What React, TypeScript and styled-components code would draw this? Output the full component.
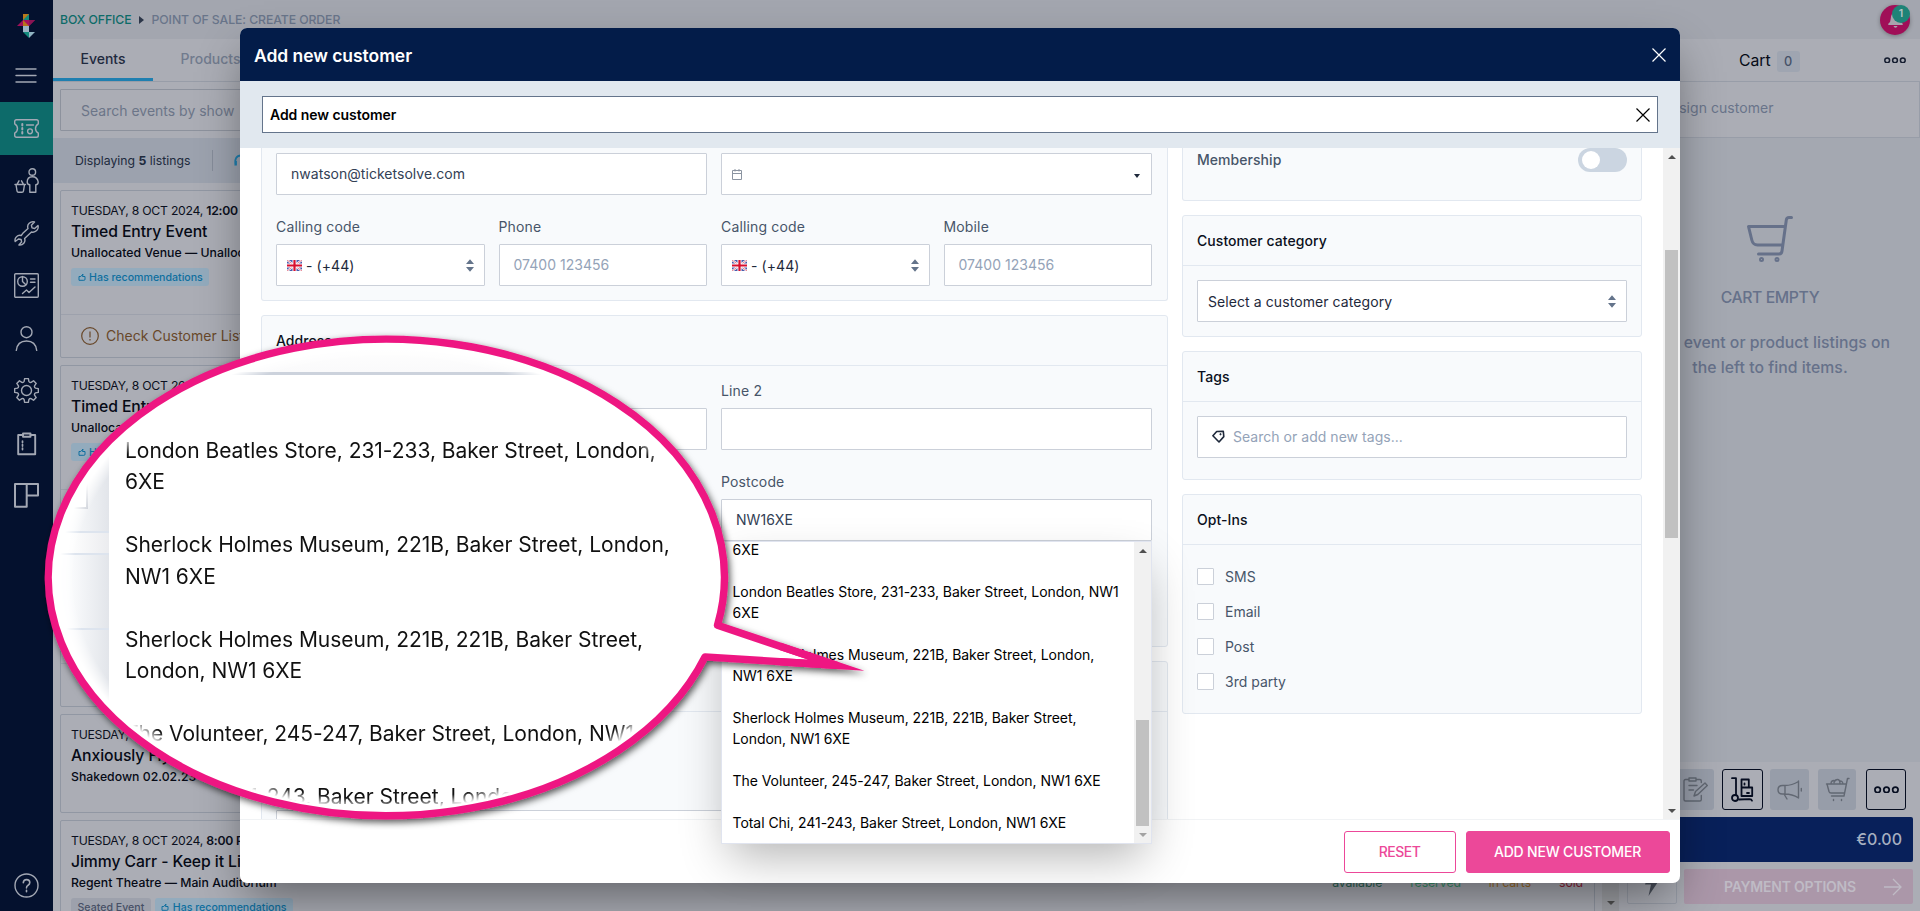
import React from 'react';
import styled, { createGlobalStyle, css } from 'styled-components';

const GlobalStyle = createGlobalStyle`
  * { box-sizing: border-box; }
  body { margin: 0; overflow: hidden; }
  svg { display: block; flex: none; }
`;

const addresses = [
  'London Beatles Store, 231-233, Baker Street, London, NW1 6XE',
  'Sherlock Holmes Museum, 221B, Baker Street, London, NW1 6XE',
  'Sherlock Holmes Museum, 221B, 221B, Baker Street, London, NW1 6XE',
  'The Volunteer, 245-247, Baker Street, London, NW1 6XE',
  'Total Chi, 241-243, Baker Street, London, NW1 6XE',
];

const optIns = ['SMS', 'Email', 'Post', '3rd party'];

// outline of an eight-toothed cog, drawn round 12.5,12.5
const cogPath = Array.from({ length: 8 }, (_, i) => {
  const at = (r: number, deg: number) => {
    const a = ((i * 45 + deg) * Math.PI) / 180;
    return `${(12.5 + r * Math.sin(a)).toFixed(2)} ${(12.5 - r * Math.cos(a)).toFixed(2)}`;
  };
  return `${i ? 'L' : 'M'}${at(9.3, -15)} L${at(12, -9)} L${at(12, 9)} L${at(9.3, 15)} Q${at(8.2, 22.5)} ${at(9.3, 30)}`;
}).join(' ') + 'Z';

const Logo = () => (
  <svg width="18" height="24" viewBox="0 0 18 24">
    <path d="M6 0h6v6H6z" fill="#b9791b" />
    <path d="M12 0v6H6z" fill="#128a7c" />
    <path d="M6 6v6H0z" fill="#a0105a" />
    <path d="M6 6h12l-6 6H6z" fill="#a90f5e" />
    <path d="M6 12V6l6 6z" fill="#b8741a" />
    <path d="M6 12h6v6H6z" fill="#9db4c4" />
    <path d="M6 18h6v6z" fill="#128a7c" />
    <path d="M12 18h6l-6 6z" fill="#8fb3c2" />
    <path d="M12 6h6l-6 6z" fill="#8a1453" />
  </svg>
);

const MenuIcon = () => (
  <svg width="22" height="15" viewBox="0 0 22 15" stroke="currentColor" strokeWidth="1.4" strokeLinecap="round">
    <path d="M1 1h20M1 7.5h20M1 14h20" />
  </svg>
);

const TicketIcon = () => (
  <Glyph>
    <path d="M2.5 3.7h20q1.8 0 1.8 1.8v2.3q-2.8 1.7-2.8 4.7t2.8 4.7v2.3q0 1.8-1.8 1.8h-20q-1.800 0-1.800-1.800v-2.300q2.800-1.700 2.800-4.700T.7 7.800V5.500q0-1.800 1.800-1.800z" />
    <circle cx="16" cy="15.3" r="2.400" />
    <path d="M12.500 9h7" />
    <path d="M8.300 8v1.600M8.300 12v1.600M8.300 16v1.600" strokeWidth="2" />
  </Glyph>
);

const CustomerIcon = () => (
  <Glyph>
    <circle cx="18.3" cy="4" r="3.3" />
    <path d="M15.800 24.300v-7.500q-2.600-.3-2.600-2.800 0-5.300 5.100-5.300t5.900 5.300q0 2.500-2.400 2.800v7.500z" />
    <path d="M1 16.500h10.500M2 16.500l1 6.300q.2 1.500 1.600 1.500h3.300q1.400 0 1.600-1.500l1-6.300M3 16.300l2-3.500M9.500 16.300l-2-3.500" />
  </Glyph>
);

const WrenchIcon = () => (
  <Glyph>
    <path d="M8.800 12.300 14 7.500q-1.100-3 1.200-5.200Q17.500.2 20.500 1L17.400 4.200l.6 2.700 2.700.6L24 4.500q.8 3-1.300 5.100-2.200 2.200-5.200 1.400l-6.900 6.400q1 2.900-.8 4.900-2 2.200-4.900 1.700l2.700-3-.5-2.500-2.600-.5-3.300 2.500q-.8-2.800 1.300-4.800 2-2 4.700-1.200z" />
  </Glyph>
);

const ReportIcon = () => (
  <Glyph>
    <rect x=".7" y=".7" width="23.6" height="23.6" rx="1" />
    <circle cx="8.5" cy="8.5" r="4.8" />
    <path d="M8.500 3.500v5l3.300 3.300M16.500 6h4.500M16.500 9.200h4.500M8.500 20.500l4-3.500 2.500 2.500 6-5.500" />
  </Glyph>
);

const UserIcon = () => (
  <Glyph>
    <circle cx="12.5" cy="6.2" r="5.5" />
    <path d="M2.300 24.500q1-9.500 10.200-9.500t10.200 9.500" />
  </Glyph>
);

const CogIcon = () => (
  <Glyph>
    <path d={cogPath} />
    <circle cx="12.5" cy="12.5" r="5" />
  </Glyph>
);

const ClipboardIcon = () => (
  <Glyph>
    <path d="M9 4H4.200v19.300h17V4H16.500" strokeWidth="1.900" />
    <path d="M9 2.500h7.500v3.300H9z" strokeWidth="1.900" />
    <path d="M8.500 10v1.600M8.500 13.500v1.600M8.500 17v1.600" strokeWidth="1.700" />
  </Glyph>
);

const BlocksIcon = () => (
  <Glyph>
    <path d="M1 1h11.700v22.800H1zM12.700 1h11.300v11.500H12.700z" strokeWidth="2" />
  </Glyph>
);

const HelpIcon = () => (
  <Glyph>
    <circle cx="12.5" cy="12.5" r="11.5" />
    <path d="M9.300 9.800q.2-3.200 3.300-3.200t3.200 2.900q0 1.700-1.700 2.700t-1.600 2.700M12.500 17.300v1.500" strokeWidth="1.600" />
  </Glyph>
);

const CloseIcon = () => (
  <svg width="14" height="14" viewBox="0 0 14 14" stroke="currentColor" strokeWidth="1.2">
    <path d="M.5.5l13 13M13.500.5l-13 13" />
  </svg>
);

const SortIcon = () => (
  <svg width="8" height="13" viewBox="0 0 8 13" fill="#64748b">
    <path d="M0 5 4 .3 8 5zM0 8h8l-4 4.700z" />
  </svg>
);

const ThumbIcon = () => (
  <svg width="8" height="8" viewBox="0 0 8 8" fill="none" stroke="currentColor">
    <path d="M1 3.500v3.800h4.800L7 6.800V3.500H4.500L5 1 2.800 3.500z" />
  </svg>
);

const WarningIcon = () => (
  <svg width="18" height="18" viewBox="0 0 18 18" fill="none" stroke="currentColor" strokeWidth="1.2">
    <circle cx="9" cy="9" r="8.3" />
    <path d="M9 4.500v6M9 12v1.500" />
  </svg>
);

const FlagIcon = () => (
  <svg width="15" height="11" viewBox="0 0 15 11">
    <rect width="15" height="11" rx="1.5" fill="#4a5bab" />
    <path d="M0 0l15 11M15 0L0 11" stroke="#fff" strokeWidth="2.2" />
    <path d="M0 0l15 11M15 0L0 11" stroke="#d8485e" strokeWidth=".7" />
    <path d="M7.500 0v11M0 5.500h15" stroke="#fff" strokeWidth="4" />
    <path d="M7.500 0v11M0 5.500h15" stroke="#d80f2f" strokeWidth="2.2" />
  </svg>
);

const CalendarIcon = () => (
  <svg width="10" height="11" viewBox="0 0 10 11" fill="none" stroke="#8b94a1">
    <path d="M.5 1.500h9v9h-9zM.5 4.500h9M3 0v2.500M7 0v2.500" />
  </svg>
);

const TagIcon = () => (
  <svg width="13" height="13" viewBox="0 0 13 13" fill="none" stroke="#1e293b" strokeWidth="1.6" strokeLinejoin="round">
    <path d="M.9 5.800 4.700 1.500l6.600-.3.500 5.400L7 12z" />
    <circle cx="8.5" cy="4.2" r=".7" fill="#1e293b" strokeWidth=".8" />
  </svg>
);

const BellIcon = () => (
  <svg width="15" height="16" viewBox="0 0 15 16" fill="#a9a3ad">
    <path d="M7.500 0q4.800 1 4.800 7 0 3 2.400 4.800v1.200H.3v-1.200Q2.700 10 2.700 7q0-6 4.800-7zM5.500 14h4q-.5 1.800-2 1.800t-2-1.800z" />
  </svg>
);

const CartIcon = () => (
  <svg width="46" height="46" viewBox="0 0 46 46" fill="none" stroke="currentColor" strokeWidth="3" strokeLinecap="round" strokeLinejoin="round">
    <path d="M44.500 1.500H42q-2.300 0-2.700 2.500L35 35q-.4 3-3 3H11.500M38 10.500H1.500l3.300 13.500q1.200 5 5.700 5H35.500" />
    <circle cx="14.5" cy="43.5" r="1" />
    <circle cx="30" cy="43.5" r="1" />
  </svg>
);

const DotsIcon = ({ width = 22 }: { width?: number }) => (
  <svg width={width} height={width / 3.3} viewBox="0 0 22 6.6" fill="none" stroke="currentColor" strokeWidth="1.5">
    <circle cx="3.2" cy="3.3" r="2.400" />
    <circle cx="11" cy="3.3" r="2.400" />
    <circle cx="18.8" cy="3.3" r="2.400" />
  </svg>
);

const NoteIcon = () => (
  <Glyph>
    <path d="M6 2.500H2.500Q1 2.500 1 4v18.500Q1 24 2.500 24h14.300q1.500 0 1.500-1.500v-4M13 2.500h3.800q1.500 0 1.500 1.500v1.500M6 1h7v3H6zM6 8.500h8M6 13h4.500" />
    <path d="M12.500 14.500 22 6l2.300 2.500-9.500 9L11 19z" />
  </Glyph>
);

const TrolleyIcon = () => (
  <Glyph>
    <path d="M2 1.200h4V18M9 22.500l10.500-.3q2 0 2.500 1.500" strokeWidth="1.800" />
    <circle cx="5" cy="21" r="3" strokeWidth="1.800" />
    <path d="M11.500 2.500h7.300v8h-7.300zM11.500 10.500h10.700v8.500H11.500zM14.500 7.500v-1M17 16h2" strokeWidth="1.800" />
  </Glyph>
);

const MegaphoneIcon = () => (
  <Glyph>
    <path d="M21.500 4v17M21.500 4.500Q15 8.500 8 8.500H5.500q-4.500 0-4.500 4.300T5.500 17H8q7 0 13.500 3.800M8 8.500V17M7 17l3 5M24.300 11.500v2.500" />
  </Glyph>
);

const BasketIcon = () => (
  <Glyph>
    <path d="M24 1.500h-1.500L19 19H6.500M1.500 7h19.800M2 7l2 7.500q.5 1.500 2 1.500h13.500M6 7q0-3.500 3-3.500M9 5.500q1-3 3.500-3t2.500 4.500M14.500 4q3-.5 3.500 3M8.500 22.500v1M16.500 22.500v1" />
  </Glyph>
);

const BoltIcon = () => (
  <svg width="16" height="26" viewBox="0 0 16 26" fill="currentColor">
    <path d="M6 0h8l-3 9h5L4.500 26 7 14.500H1z" />
  </svg>
);

const ArrowIcon = () => (
  <svg width="18" height="18" viewBox="0 0 18 18" fill="none" stroke="currentColor" strokeWidth="1.3">
    <path d="M0 9h17M9 1l8 8-8 8" />
  </svg>
);

const HeadphonesIcon = () => (
  <svg width="14" height="14" viewBox="0 0 14 14" fill="none" stroke="#1f7fae" strokeWidth="1.8">
    <path d="M1.500 11.500Q0 1.500 7 1.500t5.500 10M2 7v4.500" />
  </svg>
);

const EventCard = (props: {
  title: string;
  venue: string;
  time?: string;
  height: number;
  badges?: boolean;
  seated?: boolean;
  note?: string;
  legend?: boolean;
}) => (
  <Card $height={props.height}>
    <CardInfo>
      <CardDate>
        TUESDAY, 8 OCT 2024, <b>{props.time}</b>
      </CardDate>
      <CardTitle>{props.title}</CardTitle>
      <CardVenue>
        {props.venue}
        {props.legend && (
          <Legend>
            <LegendItem $color="#2c6655">available</LegendItem>
            <LegendItem $color="#3a936d">reserved</LegendItem>
            <LegendItem $color="#a06f2c">in carts</LegendItem>
            <LegendItem $color="#8f2438">sold</LegendItem>
          </Legend>
        )}
      </CardVenue>
      <Badges>
        {props.seated && <Badge>Seated Event</Badge>}
        {props.badges && (
          <Badge $blue>
            <ThumbIcon />
            Has recommendations
          </Badge>
        )}
      </Badges>
    </CardInfo>
    {props.note !== undefined && (
      <CardNote>
        {props.note && <WarningIcon />}
        {props.note}
      </CardNote>
    )}
  </Card>
);

const CallingCode = () => (
  <Field>
    <Label>Calling code</Label>
    <Input $select>
      <FlagIcon />
      <SelectText>- (+44)</SelectText>
      <SortIcon />
    </Input>
  </Field>
);

const App = () => {
  return (
    <Page>
      <GlobalStyle />
      <SideBar>
        <SideTop>
          <Logo />
          <MenuIcon />
        </SideTop>
        <SideItem $active><TicketIcon /></SideItem>
        <SideItem><CustomerIcon /></SideItem>
        <SideItem><WrenchIcon /></SideItem>
        <SideItem><ReportIcon /></SideItem>
        <SideItem><UserIcon /></SideItem>
        <SideItem><CogIcon /></SideItem>
        <SideItem><ClipboardIcon /></SideItem>
        <SideItem><BlocksIcon /></SideItem>
        <SideHelp><HelpIcon /></SideHelp>
      </SideBar>

      <Main>
        <TopBar>
          <Crumb $link>BOX OFFICE</Crumb>
          <CrumbArrow />
          <Crumb>POINT OF SALE: CREATE ORDER</Crumb>
          <Bell>
            <BellIcon />
            <BellCount>1</BellCount>
          </Bell>
        </TopBar>
        <Columns>
          <Listings>
            <Tabs>
              <Tab $active>Events</Tab>
              <Tab>Products</Tab>
            </Tabs>
            <SearchRow>
              <SearchBox>Search events by show</SearchBox>
            </SearchRow>
            <FilterBar>
              <span>Displaying <b>5</b> listings</span>
              <FilterDivider />
              <HeadphonesIcon />
            </FilterBar>
            <ListArea>
              <CardList>
                <EventCard title="Timed Entry Event" venue="Unallocated Venue — Unallocated" time="12:00 PM" height={168} badges note="Check Customer List" />
                <EventCard title="Timed Entry Event" venue="Unallocated" time="" height={167.5} badges note="" />
                <EventCard title="Timed Entry Event" venue="Unallocated" time="" height={167.5} badges note="" />
                <EventCard title="Anxiously Fly" venue="Shakedown 02.02.23" time="" height={99} />
                <EventCard title="Jimmy Carr - Keep it Live" venue="Regent Theatre — Main Auditorium" time="8:00 PM" height={168} badges seated legend />
              </CardList>
              <ListScroll>
                <ScrollArrow $down />
              </ListScroll>
            </ListArea>
          </Listings>

          <CartPanel>
            <CartHeader>
              <CartTitle>Cart</CartTitle>
              <CartCount>0</CartCount>
              <DotsIcon />
            </CartHeader>
            <AssignRow>Assign customer</AssignRow>
            <CartBody>
              <CartIcon />
              <CartEmpty>CART EMPTY</CartEmpty>
              <CartHint>Use event or product listings on the left to find items.</CartHint>
            </CartBody>
            <CartFooter>
              <ToolRow>
                <Tool $width={38}><NoteIcon /></Tool>
                <Tool $width={41} $on><TrolleyIcon /></Tool>
                <Tool $width={39}><MegaphoneIcon /></Tool>
                <Tool $width={38}><BasketIcon /></Tool>
                <Tool $width={40} $on><DotsIcon width={25} /></Tool>
              </ToolRow>
              <Total>€0.00</Total>
              <PayRow>
                <BoltButton><BoltIcon /></BoltButton>
                <PayButton>
                  <span>PAYMENT OPTIONS</span>
                  <ArrowIcon />
                </PayButton>
              </PayRow>
            </CartFooter>
          </CartPanel>
        </Columns>
      </Main>

      <Overlay>
        <Modal>
          <ModalHeader>
            Add new customer
            <CloseIcon />
          </ModalHeader>
          <ModalSub>
            <SubBox>
              Add new customer
              <CloseIcon />
            </SubBox>
          </ModalSub>
          <ModalBody>
            <FormGrid>
              <Column>
                <Panel $cut>
                  <PanelBody $top={5} $right={15}>
                    <Row>
                      <Input>nwatson@ticketsolve.com</Input>
                      <Input $select>
                        <CalendarIcon />
                        <SelectText />
                        <Caret />
                      </Input>
                    </Row>
                    <Row $cols={4}>
                      <CallingCode />
                      <Field>
                        <Label>Phone</Label>
                        <Input $placeholder>07400 123456</Input>
                      </Field>
                      <CallingCode />
                      <Field>
                        <Label>Mobile</Label>
                        <Input $placeholder>07400 123456</Input>
                      </Field>
                    </Row>
                  </PanelBody>
                </Panel>
                <Panel>
                  <PanelTitle>Address</PanelTitle>
                  <PanelBody $right={15}>
                    <Row>
                      <Field><Label /><Input /></Field>
                      <Field>
                        <Label>Line 2</Label>
                        <Input />
                      </Field>
                    </Row>
                    <Row>
                      <Field><Label /><Input /></Field>
                      <Field>
                        <Label>Postcode</Label>
                        <Input>NW16XE</Input>
                      </Field>
                    </Row>
                    <Row>
                      <Field><Label /><Input /></Field>
                      <Field><Label /><Input /></Field>
                    </Row>
                  </PanelBody>
                </Panel>
                <Panel>
                  <PanelTitle />
                  <PanelBody $top={70} $right={15}>
                    <Field><Label /><Input /></Field>
                  </PanelBody>
                </Panel>
              </Column>

              <Column>
                <Panel $cut>
                  <MembershipRow>
                    Membership
                    <Toggle><Knob /></Toggle>
                  </MembershipRow>
                </Panel>
                <Panel>
                  <PanelTitle>Customer category</PanelTitle>
                  <PanelBody>
                    <Input $select>
                      <SelectText>Select a customer category</SelectText>
                      <SortIcon />
                    </Input>
                  </PanelBody>
                </Panel>
                <Panel>
                  <PanelTitle>Tags</PanelTitle>
                  <PanelBody $bottom={21}>
                    <Input $placeholder $gap={8}>
                      <TagIcon />
                      Search or add new tags...
                    </Input>
                  </PanelBody>
                </Panel>
                <Panel>
                  <PanelTitle>Opt-Ins</PanelTitle>
                  <PanelBody>
                    <div>
                      {optIns.map(name => (
                        <OptIn key={name}>
                          <CheckBox />
                          {name}
                        </OptIn>
                      ))}
                    </div>
                  </PanelBody>
                </Panel>
              </Column>
            </FormGrid>
            <Scrollbar>
              <ScrollArrow />
              <Thumb $top={85} $height={288} />
              <ScrollArrow $down />
            </Scrollbar>
          </ModalBody>
          <ModalFooter>
            <Button>RESET</Button>
            <Button $primary>ADD NEW CUSTOMER</Button>
          </ModalFooter>

          <Dropdown>
            <Options>
              <Option>6XE</Option>
              {addresses.map(a => <Option key={a}>{a}</Option>)}
            </Options>
            <Scrollbar>
              <ScrollArrow />
              <Thumb $top={161} $height={106} />
              <ScrollArrow $down $faint />
            </Scrollbar>
          </Dropdown>
        </Modal>
      </Overlay>

      {/* magnified view of the suggestions */}
      <Callout>
        <svg width="830" height="500" viewBox="40 330 830 500">
          <defs>
            <filter id="shade" x="-10%" y="-10%" width="120%" height="120%">
              <feDropShadow dx="2" dy="3" stdDeviation="3.5" floodOpacity="0.65" />
            </filter>
          </defs>
          <g filter="url(#shade)" stroke="#ee1882" strokeWidth="7.4">
            <path d="M717.500 625.200A338 238.200 0 1 0 705 656.900L836.500 665.300Z" fill="#fff" strokeLinejoin="round" />
            <path d="M780 646.300 836.500 665.300 780 661.700" fill="none" strokeMiterlimit="12" />
          </g>
        </svg>
        <Lens>
          <LensGlow />
          <LensPanel>
            <LensGap />
            <LensPanelBody />
          </LensPanel>
          <LensInputCorner />
          <LensList>
            <LensOption>London Beatles Store, 231-233, Baker Street, London,<br />6XE</LensOption>
            {addresses.slice(1).map(a => <LensOption key={a}>{a}</LensOption>)}
          </LensList>
        </Lens>
      </Callout>
    </Page>
  );
};

const Glyph = styled.svg.attrs({ viewBox: '0 0 25 25', width: 25, height: 25 })`
  fill: none;
  stroke: currentColor;
  stroke-width: 1.4;
  stroke-linejoin: round;
  stroke-linecap: round;
`;

const Page = styled.div`
  position: relative;
  display: flex;
  width: 1920px;
  height: 911px;
  overflow: hidden;
  font-family: Inter, 'Liberation Sans', sans-serif;
  font-size: 14px;
  line-height: 21px;
  color: #0b1020;
  background: #a4a8b1;
`;

const SideBar = styled.div`
  width: 53px;
  height: 100%;
  display: flex;
  flex-direction: column;
  color: #a3a8b4;
  background: #04112e;
`;
const SideTop = styled.div`
  height: 102px;
  padding: 14px 1px 0 0;
  display: flex;
  flex-direction: column;
  align-items: center;
  gap: 30px;
`;
const SideItem = styled.div<{ $active?: boolean }>`
  height: 52.5px;
  padding-right: 1px;
  display: flex;
  align-items: center;
  justify-content: center;
  background: ${p => (p.$active ? '#0d6b6a' : 'none')};
`;
const SideHelp = styled.div`
  margin-top: auto;
  height: 52px;
  padding-right: 1px;
  display: flex;
  align-items: center;
  justify-content: center;
`;

const Main = styled.div`
  width: 1867px;
  display: flex;
  flex-direction: column;
`;
const TopBar = styled.div`
  height: 39px;
  padding: 0 10px 0 7px;
  display: flex;
  align-items: center;
  background: #a3a6af;
`;
const Crumb = styled.span<{ $link?: boolean }>`
  font-size: 12.25px;
  font-weight: 500;
  letter-spacing: -0.08px;
  color: ${p => (p.$link ? '#0d6b68' : '#69758a')};
`;
const CrumbArrow = styled.span`
  margin: 0 8px 0 7px;
  border-left: 5px solid #2c3649;
  border-top: 4.5px solid transparent;
  border-bottom: 4.5px solid transparent;
`;
const Bell = styled.div`
  position: relative;
  margin-left: auto;
  width: 30px;
  height: 30px;
  border-radius: 50%;
  display: flex;
  align-items: center;
  justify-content: center;
  background: #a00f58;
  box-shadow: 0 1px 4px rgba(0, 0, 0, 0.3);
`;
const BellCount = styled.span`
  position: absolute;
  top: 0;
  right: 0;
  width: 18px;
  height: 18px;
  border-radius: 50%;
  text-align: center;
  line-height: 18px;
  font-size: 10.5px;
  font-weight: 600;
  color: #b4c4c6;
  background: #1e8377;
`;
const Columns = styled.div`
  flex: 1;
  min-height: 0;
  display: flex;
`;

const Listings = styled.div`
  width: 1567px;
  display: flex;
  flex-direction: column;
  background: #abadb5;
`;
const Tabs = styled.div`
  height: 43px;
  display: flex;
  border-bottom: 1px solid #989da8;
`;
const Tab = styled.div<{ $active?: boolean }>`
  padding: 9px 27.5px 0;
  font-weight: 500;
  color: ${p => (p.$active ? '#1f2a3e' : '#717b8e')};
  border-bottom: ${p => (p.$active ? '3px solid #1f7fb0' : 'none')};
`;
const SearchRow = styled.div`
  padding: 7px;
`;
const SearchBox = styled.div`
  height: 42px;
  padding: 10px 20px;
  border: 1px solid #8d929d;
  border-radius: 1px;
  color: #6b7588;
`;
const FilterBar = styled.div`
  height: 45px;
  padding-left: 22px;
  display: flex;
  align-items: center;
  font-size: 12.25px;
  color: #202a3d;
  background: #9ca2ae;
`;
const FilterDivider = styled.i`
  width: 1px;
  height: 21px;
  margin: 0 21px 0 22px;
  background: #858c9a;
`;
const ListArea = styled.div`
  flex: 1;
  min-height: 0;
  display: flex;
  overflow: hidden;
`;
const CardList = styled.div`
  width: 1549px;
  padding: 7px;
  display: flex;
  flex-direction: column;
  gap: 7px;
`;
const Card = styled.div<{ $height: number }>`
  flex: none;
  display: flex;
  flex-direction: column;
  height: ${p => p.$height}px;
  border: 1px solid #9197a3;
  border-radius: 2px;
`;
const CardInfo = styled.div`
  flex: 1;
  padding: 9px 10px;
`;
const CardDate = styled.div`
  font-size: 12.25px;
  letter-spacing: -0.26px;
  white-space: pre;
  b {
    font-weight: 600;
  }
`;
const CardTitle = styled.div`
  font-size: 15.75px;
  font-weight: 500;
  letter-spacing: -0.08px;
  color: #060a16;
`;
const CardVenue = styled.div`
  display: flex;
  justify-content: space-between;
  font-size: 12.25px;
  font-weight: 500;
  letter-spacing: 0.02px;
  color: #060a16;
`;
const Legend = styled.div`
  display: flex;
  gap: 28px;
  padding-right: 1px;
  font-weight: 400;
`;
const LegendItem = styled.span<{ $color: string }>`
  letter-spacing: -0.08px;
  color: ${p => p.$color};
`;
const Badges = styled.div`
  display: flex;
  gap: 4px;
  padding-top: 5px;
`;
const Badge = styled.span<{ $blue?: boolean }>`
  display: flex;
  align-items: center;
  gap: 3.5px;
  height: 18px;
  padding: 0 6.5px;
  border-radius: 3px;
  font-size: 10.6px;
  font-weight: 500;
  color: ${p => (p.$blue ? '#0f6f9f' : '#475066')};
  background: ${p => (p.$blue ? '#93abbd' : '#9da1ac')};
`;
const CardNote = styled.div`
  height: 43px;
  padding: 0 0 1px 20px;
  display: flex;
  align-items: center;
  gap: 7px;
  border-top: 1px solid #9da1ac;
  color: #68482a;
`;
const ListScroll = styled.div`
  width: 17px;
  display: flex;
  flex-direction: column;
  justify-content: flex-end;
  background: #a1a3a8;
`;

const CartPanel = styled.div`
  width: 300px;
  display: flex;
  flex-direction: column;
  background: #a4a8b1;
`;
const CartHeader = styled.div`
  height: 43px;
  padding: 0 14px 0 119px;
  display: flex;
  align-items: center;
  color: #151d30;
  background: #abadb5;
  border-bottom: 1px solid #989da8;
  svg {
    margin-left: auto;
  }
`;
const CartTitle = styled.span`
  font-size: 15.75px;
  color: #060a16;
`;
const CartCount = styled.span`
  margin: 2px 0 0 6px;
  width: 23px;
  height: 21px;
  border-radius: 3px;
  text-align: center;
  font-size: 12.75px;
  font-weight: 500;
  color: #475268;
  background: #9fa5b1;
`;
const AssignRow = styled.div`
  height: 56px;
  padding: 15px 0 0 42px;
  letter-spacing: 0.05px;
  color: #69748a;
  background: #abadb5;
  border-right: 1px solid #989da8;
  border-bottom: 1px solid #989da8;
`;
const CartBody = styled.div`
  flex: 1;
  padding-top: 78px;
  display: flex;
  flex-direction: column;
  align-items: center;
  color: #66718a;
`;
const CartEmpty = styled.div`
  margin-top: 24px;
  font-size: 15.75px;
  font-weight: 500;
  line-height: 24.5px;
  letter-spacing: -0.4px;
`;
const CartHint = styled.div`
  width: 260px;
  margin-top: 20.5px;
  text-align: center;
  font-size: 15.75px;
  font-weight: 500;
  line-height: 24.5px;
  letter-spacing: 0.04px;
`;
const CartFooter = styled.div`
  padding: 7px;
  display: flex;
  flex-direction: column;
  gap: 7px;
  background: #abadb5;
`;
const ToolRow = styled.div`
  display: grid;
  grid-template-columns: 46px 48px 48px 48px 40px;
  justify-content: end;
  padding-right: 7px;
`;
const Tool = styled.div<{ $width: number; $on?: boolean }>`
  width: ${p => p.$width}px;
  height: 41px;
  border-radius: 3px;
  display: flex;
  align-items: center;
  justify-content: center;
  ${p =>
    p.$on
      ? css`
          color: #060d20;
          border: 1px solid #060d20;
        `
      : css`
          color: #626873;
          background: #979da9;
        `}
`;
const Total = styled.div`
  height: 45px;
  padding: 12px 11px;
  text-align: right;
  font-size: 16px;
  font-weight: 500;
  color: #a6afc0;
  background: #08205a;
  border-radius: 2px;
`;
const PayRow = styled.div`
  display: flex;
  gap: 7px;
`;
const BoltButton = styled.div`
  width: 50px;
  height: 35px;
  display: flex;
  justify-content: center;
  color: #4a505c;
  border: 1px solid #989da8;
  border-radius: 2px;
`;
const PayButton = styled.div`
  flex: 1;
  height: 35px;
  padding: 0 11px 0 40px;
  display: flex;
  align-items: center;
  justify-content: space-between;
  font-weight: 600;
  letter-spacing: -0.22px;
  color: #bfbbc5;
  background: #ab97a9;
  border-radius: 2px;
`;

const Overlay = styled.div`
  position: absolute;
  inset: 0;
  padding: 28px 240px;
  display: flex;
`;
const Modal = styled.div`
  position: relative;
  flex: 1;
  display: flex;
  flex-direction: column;
  border-radius: 7px;
  background: #fff;
  box-shadow: 0 20px 45px -8px rgba(0, 0, 0, 0.45);
`;
const ModalHeader = styled.div`
  height: 53px;
  padding: 1px 14px 0;
  display: flex;
  align-items: center;
  justify-content: space-between;
  font-size: 17.5px;
  font-weight: 600;
  letter-spacing: -0.05px;
  color: #fff;
  background: #031c49;
  border-radius: 7px 7px 0 0;
`;
const ModalSub = styled.div`
  height: 67px;
  padding: 15px 22px;
  background: #e1e8ef;
`;
const SubBox = styled.div`
  height: 37px;
  padding: 0 7px;
  display: flex;
  align-items: center;
  justify-content: space-between;
  font-weight: 600;
  letter-spacing: -0.05px;
  color: #000;
  background: #fff;
  border: 1px solid #64748b;
`;
const ModalBody = styled.div`
  height: 671px;
  display: flex;
  overflow: hidden;
`;
const FormGrid = styled.div`
  flex: 1;
  padding-left: 21px;
  display: grid;
  grid-template-columns: 907px 460px;
  gap: 14px;
  align-items: start;
`;
const Column = styled.div`
  display: flex;
  flex-direction: column;
  gap: 14px;
`;
const Panel = styled.div<{ $cut?: boolean }>`
  border: 1px solid #e2e8f0;
  border-radius: 3px;
  background: #f8fafc;
  ${p =>
    p.$cut &&
    css`
      border-top: none;
      border-radius: 0 0 3px 3px;
    `}
`;
const PanelTitle = styled.div`
  height: 50px;
  padding: 14px 14px 0;
  font-weight: 500;
  letter-spacing: 0.05px;
  color: #0b1020;
  border-bottom: 1px solid #e2e8f0;
`;
const PanelBody = styled.div<{ $top?: number; $right?: number; $bottom?: number }>`
  padding: ${p => p.$top ?? 14}px ${p => p.$right ?? 14}px ${p => p.$bottom ?? 14}px 14px;
  display: flex;
  flex-direction: column;
  gap: 21px;
`;
const Row = styled.div<{ $cols?: number }>`
  display: grid;
  grid-template-columns: repeat(${p => p.$cols || 2}, 1fr);
  gap: 14px;
`;
const Field = styled.div`
  display: flex;
  flex-direction: column;
  gap: 7px;
`;
const Label = styled.div`
  height: 21px;
  letter-spacing: 0.15px;
  color: #475569;
`;
const Input = styled.div<{ $select?: boolean; $placeholder?: boolean; $gap?: number }>`
  height: 42px;
  padding: ${p => (p.$select ? '0 10px' : '0 14px 1px')};
  display: flex;
  align-items: center;
  gap: ${p => p.$gap || 4}px;
  letter-spacing: 0.03px;
  color: ${p => (p.$placeholder ? '#94a3b8' : p.$select ? '#1e293b' : '#334155')};
  background: #fff;
  border: 1px solid #cbd0d9;
  border-radius: 1px;
`;
const SelectText = styled.span`
  flex: 1;
  letter-spacing: 0.08px;
`;
const Caret = styled.span`
  margin: 3px 1px 0 0;
  border-top: 4px solid #1e293b;
  border-left: 3.5px solid transparent;
  border-right: 3.5px solid transparent;
`;
const MembershipRow = styled.div`
  height: 52px;
  padding: 0 14px;
  display: flex;
  justify-content: space-between;
  font-weight: 500;
  line-height: 24px;
  letter-spacing: 0.05px;
  color: #475569;
`;
const Toggle = styled.div`
  width: 49px;
  height: 24px;
  padding: 3px 4px;
  border-radius: 12px;
  background: #cbd5e1;
`;
const Knob = styled.div`
  width: 18px;
  height: 18px;
  border-radius: 50%;
  background: #fff;
`;
const OptIn = styled.div`
  height: 35px;
  display: flex;
  align-items: center;
  gap: 11px;
  color: #475569;
`;
const CheckBox = styled.span`
  width: 17px;
  height: 17px;
  background: #fff;
  border: 1px solid #cbd0d9;
  border-radius: 1px;
`;
const Scrollbar = styled.div`
  position: relative;
  width: 17px;
  display: flex;
  flex-direction: column;
  justify-content: space-between;
  background: #f1f1f1;
`;
const ScrollArrow = styled.div<{ $down?: boolean; $faint?: boolean }>`
  height: 17px;
  display: flex;
  align-items: center;
  justify-content: center;
  &::before {
    content: '';
    border: 4px solid transparent;
    ${p =>
      p.$down
        ? css`
            border-bottom: none;
            border-top-color: ${p.$faint ? '#a3a3a3' : '#505050'};
          `
        : css`
            border-top: none;
            border-bottom-color: #505050;
          `}
  }
`;
const Thumb = styled.div<{ $top: number; $height: number }>`
  position: absolute;
  left: 2px;
  top: ${p => p.$top + 17}px;
  width: 13px;
  height: ${p => p.$height}px;
  background: #c1c1c1;
`;
const ModalFooter = styled.div`
  flex: 1;
  padding: 0 10px;
  display: flex;
  align-items: center;
  justify-content: flex-end;
  gap: 10px;
  border-top: 1px solid #f1f3f5;
`;
const Button = styled.div<{ $primary?: boolean }>`
  width: ${p => (p.$primary ? 204 : 112)}px;
  height: 42px;
  padding-right: 1px;
  display: flex;
  align-items: center;
  justify-content: center;
  font-weight: 500;
  letter-spacing: ${p => (p.$primary ? -0.18 : -0.5)}px;
  color: ${p => (p.$primary ? '#fff' : '#ec4899')};
  background: ${p => (p.$primary ? '#ec4899' : '#fff')};
  border: 1px solid #ec4899;
  border-radius: 3px;
`;

const Dropdown = styled.div`
  position: absolute;
  left: 481px;
  top: 513px;
  width: 431px;
  height: 303px;
  display: flex;
  border: 1px solid #e0e4ef;
  background: #fff;
  box-shadow: 0 20px 45px -8px rgba(0, 0, 0, 0.3);
`;
const Options = styled.div`
  flex: 1;
  display: flex;
  flex-direction: column;
  justify-content: flex-end;
  overflow: hidden;
`;
const Option = styled.div`
  flex: none;
  padding: 10.5px 10.5px;
  letter-spacing: -0.05px;
  color: #000;
  &:first-child {
    padding-top: 0;
  }
`;

const Callout = styled.div`
  position: absolute;
  left: 40px;
  top: 330px;
  width: 830px;
  height: 500px;
`;
const Lens = styled.div`
  position: absolute;
  left: 10px;
  top: 11px;
  width: 673px;
  height: 475px;
  overflow: hidden;
  mask-image: radial-gradient(closest-side, #000 93%, transparent 97.5%);
`;
const LensGlow = styled.div`
  height: 34px;
  border-bottom: 3px solid #ccd2dc;
  background: linear-gradient(#fff, #fafafb);
`;
const LensPanel = styled.div`
  position: absolute;
  left: 0;
  top: 34px;
  width: 60px;
  height: 441px;
  padding-top: 156px;
  background: linear-gradient(90deg, #fcfdfe 30%, #e2e5ea);
  border-right: 1px solid #d9deea;
`;
const LensGap = styled.div`
  height: 24px;
  background: linear-gradient(90deg, #fff 30%, #ebecef);
  border: solid #dde4ee;
  border-width: 2px 0;
`;
const LensPanelBody = styled.div`
  height: 75px;
  border-bottom: 2px solid #dde4ee;
`;
const LensInputCorner = styled.div`
  position: absolute;
  left: 0;
  top: 140px;
  width: 38px;
  height: 28px;
  background: #fff;
  border: solid #ccd0d8;
  border-width: 0 2px 2px 0;
`;
const LensList = styled.div`
  position: absolute;
  left: 59px;
  top: 37px;
  width: 614px;
  height: 438px;
  padding: 41px 0 0 16px;
  overflow: hidden;
  background: #fff;
`;
const LensOption = styled.div`
  width: 580px;
  padding: 15.75px 0;
  font-size: 21px;
  line-height: 31.5px;
  letter-spacing: -0.03px;
  color: #111;
`;

export default App;
